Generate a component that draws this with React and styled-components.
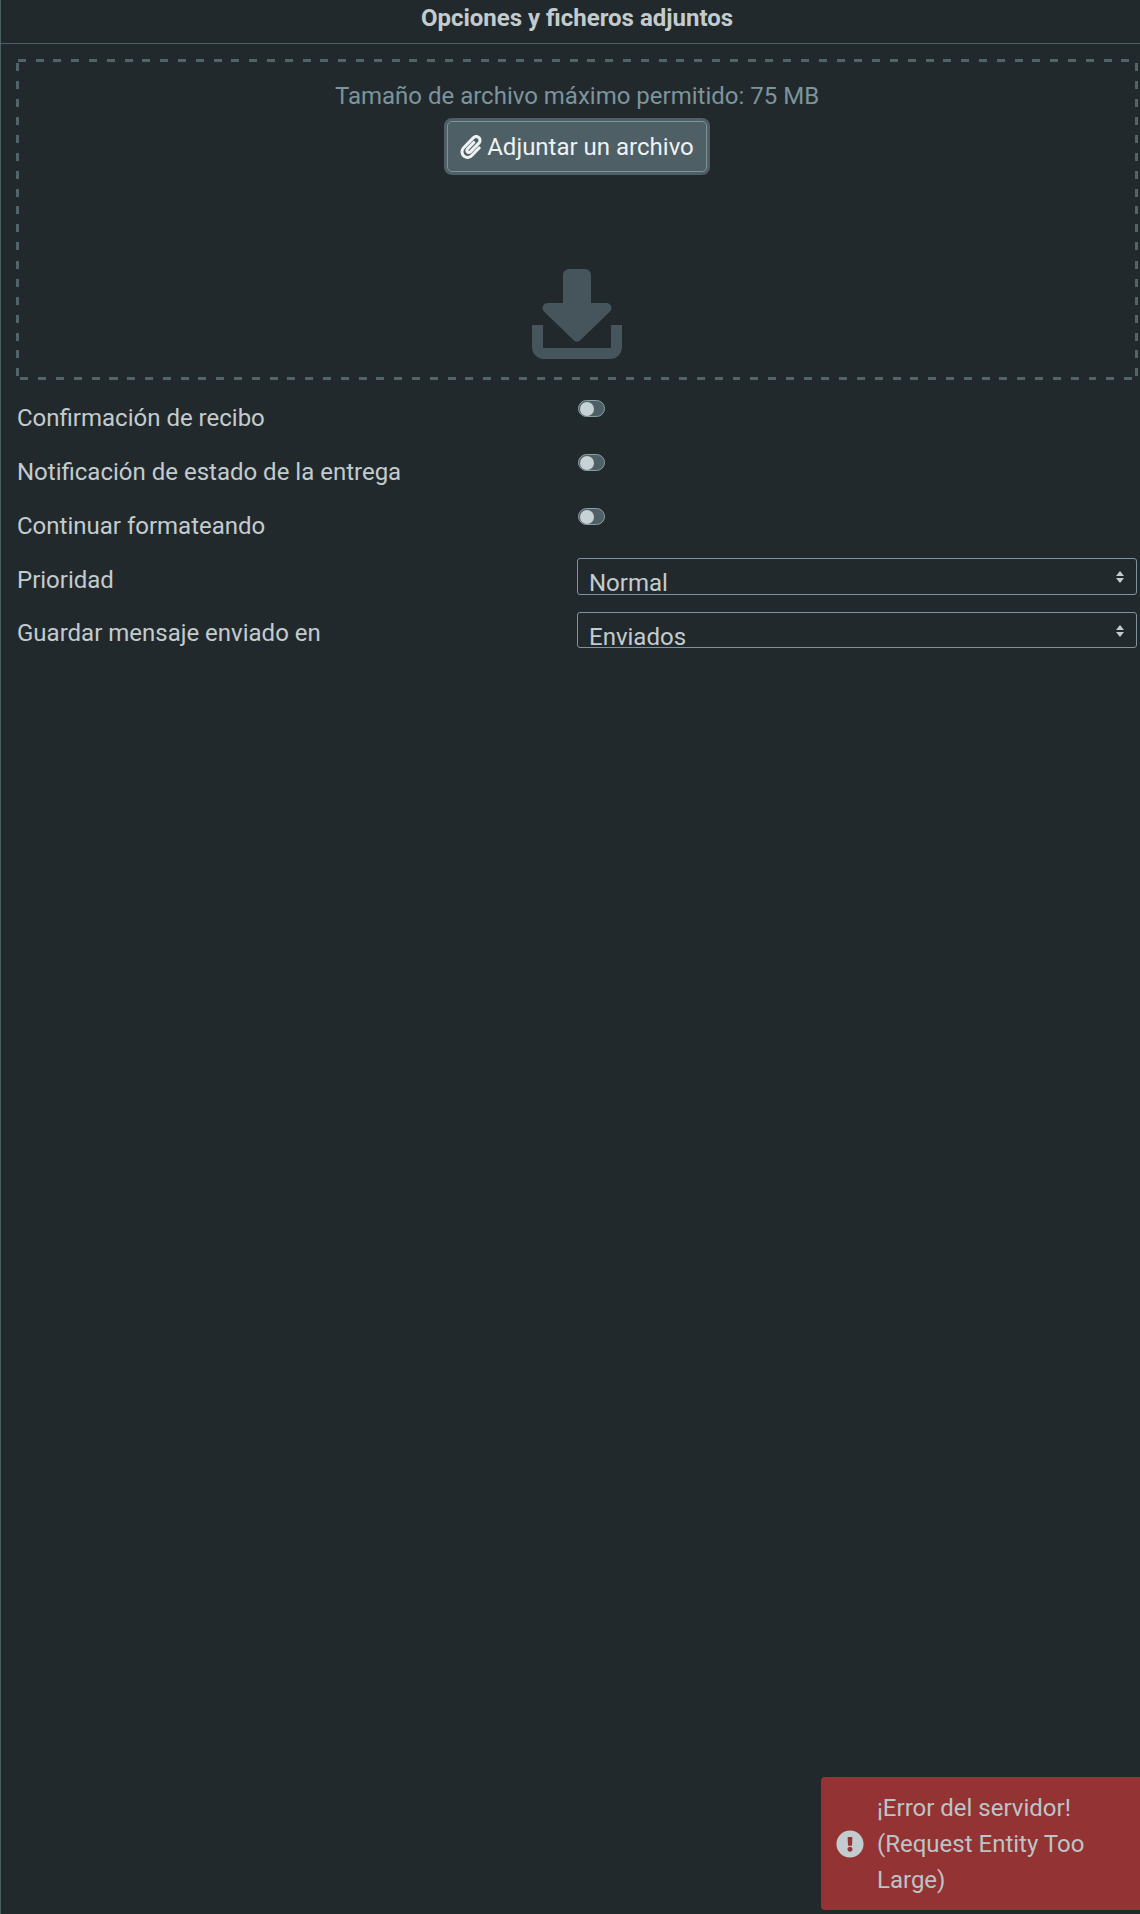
import styled, { createGlobalStyle } from "styled-components";
import { FaPaperclip, FaExclamationCircle } from "react-icons/fa";

const GlobalStyle = createGlobalStyle`
    html, body {
        margin: 0;
        padding: 0;
        background: #22292d;
    }

    * {
        box-sizing: border-box;
    }
`;

const dashColor = "#526469";

const Page = styled.div`
    position: relative;
    width: 1140px;
    height: 1914px;
    overflow: hidden;
    background: #22292d;
    border-left: 1px solid #4e5f66;
    font-family: Roboto, "Liberation Sans", sans-serif;
    font-size: 24px;
    color: #c2ccce;
`;

const Header = styled.h2`
    margin: 0;
    height: 44px;
    padding-left: 13px;
    line-height: 36px;
    font-size: 24px;
    font-weight: 700;
    text-align: center;
    border-bottom: 1px solid #4e5f66;
`;

/* the dashes are longer than a css dashed border gives, so they are gradients */
const DropZone = styled.div`
    display: flex;
    flex-direction: column;
    align-items: center;
    margin: 15px 2px 0 15px;
    height: 321px;
    padding-top: 22px;
    background:
        repeating-linear-gradient(90deg, transparent 0 1.8px, ${dashColor} 1.8px 9.8px, transparent 9.8px 17.8px) top / 100% 3px no-repeat,
        repeating-linear-gradient(90deg, transparent 0 4.5px, ${dashColor} 4.5px 12.5px, transparent 12.5px 17.8px) bottom / 100% 3px no-repeat,
        repeating-linear-gradient(180deg, transparent 0 3.5px, ${dashColor} 3.5px 11.5px, transparent 11.5px 18px) left / 3px 100% no-repeat,
        repeating-linear-gradient(180deg, transparent 0 3.5px, ${dashColor} 3.5px 11.5px, transparent 11.5px 18px) right / 3px 100% no-repeat;
`;

const SizeHint = styled.div`
    line-height: 30px;
    color: #7c949c;
`;

const AttachButton = styled.button`
    display: flex;
    align-items: center;
    gap: 4px;
    height: 51px;
    margin-top: 10px;
    padding: 0 12px 0 11px;
    font-family: inherit;
    font-size: 24px;
    color: #eef2f3;
    background: #4e5f66;
    border: 1px solid #7c949c;
    border-radius: 5px;
    box-shadow: 0 0 0 3px #4e5f66;
`;

const DropIcon = styled.svg`
    width: 90px;
    height: 90px;
    margin-top: 97px;
    color: #46555c;
`;

const Options = styled.div`
    margin: 16px 3px 0 16px;
`;

const Row = styled.div`
    display: grid;
    grid-template-columns: 560px 1fr;
    height: 54px;
`;

const Label = styled.label`
    line-height: 30px;
    padding-top: ${(p) => p.$top}px;
`;

const Switch = styled.span`
    display: flex;
    align-items: center;
    width: 27px;
    height: 17px;
    margin: 4px 0 0 1px;
    padding-left: 1px;
    background: #4e5f66;
    border: 1px solid #8aa0a7;
    border-radius: 9px;

    &::before {
        content: "";
        width: 14px;
        height: 14px;
        border-radius: 50%;
        background: #c7d2d4;
    }
`;

const SelectBox = styled.select`
    appearance: none;
    display: block;
    width: 100%;
    height: ${(p) => p.$height}px;
    padding: 10px 36px 0 11px;
    font-family: inherit;
    font-size: 24px;
    color: #c2ccce;
    background-color: #22292d;
    background-image: url("data:image/svg+xml,%3Csvg xmlns='http://www.w3.org/2000/svg' width='10' height='12'%3E%3Cpath fill='%23c2ccce' d='M5 0l4 5H1zM5 12L1 7h8z'/%3E%3C/svg%3E");
    background-repeat: no-repeat;
    background-position: right 11px top 12px;
    border: 1px solid #7c949c;
    border-radius: 3px;
    outline: none;
`;

const Toast = styled.div`
    position: absolute;
    right: 0;
    bottom: 4px;
    display: flex;
    align-items: center;
    gap: 13px;
    width: 319px;
    height: 133px;
    padding: 0 16px 0 15px;
    background: #933333;
    border-radius: 4px 0 0 4px;
    color: #bcc4c6;
    line-height: 36px;
`;

const ToastIcon = styled(FaExclamationCircle)`
    flex: none;
    width: 28px;
    height: 28px;
    color: #c2ccce;
`;

function App() {
    return (
        <Page>
            <GlobalStyle />
            <Header>Opciones y ficheros adjuntos</Header>
            <DropZone>
                <SizeHint>Tamaño de archivo máximo permitido: 75 MB</SizeHint>
                <AttachButton>
                    <FaPaperclip size={24} />
                    Adjuntar un archivo
                </AttachButton>
                <DropIcon viewBox="0 0 90 90" fill="currentColor">
                    <path d="M37 0h16a6 6 0 0 1 6 6v28h15a5 5 0 0 1 4 8.500L48 71.500a4 4 0 0 1-6 0L12 42.500A5 5 0 0 1 16 34h15V6a6 6 0 0 1 6-6z" />
                    <path d="M0 56h11v23h68V56h11v22a12 12 0 0 1-12 12H12A12 12 0 0 1 0 78z" />
                </DropIcon>
            </DropZone>
            <Options>
                <Row>
                    <Label $top={7}>Confirmación de recibo</Label>
                    <div><Switch /></div>
                </Row>
                <Row>
                    <Label $top={7}>Notificación de estado de la entrega</Label>
                    <div><Switch /></div>
                </Row>
                <Row>
                    <Label $top={7}>Continuar formateando</Label>
                    <div><Switch /></div>
                </Row>
                <Row>
                    <Label $top={7}>Prioridad</Label>
                    <SelectBox $height={37} defaultValue="Normal">
                        <option>Normal</option>
                    </SelectBox>
                </Row>
                <Row>
                    <Label $top={6}>Guardar mensaje enviado en</Label>
                    <SelectBox $height={36} defaultValue="Enviados">
                        <option>Enviados</option>
                    </SelectBox>
                </Row>
            </Options>
            <Toast>
                <ToastIcon />
                <div>¡Error del servidor! (Request Entity Too Large)</div>
            </Toast>
        </Page>
    );
}

export default App;
